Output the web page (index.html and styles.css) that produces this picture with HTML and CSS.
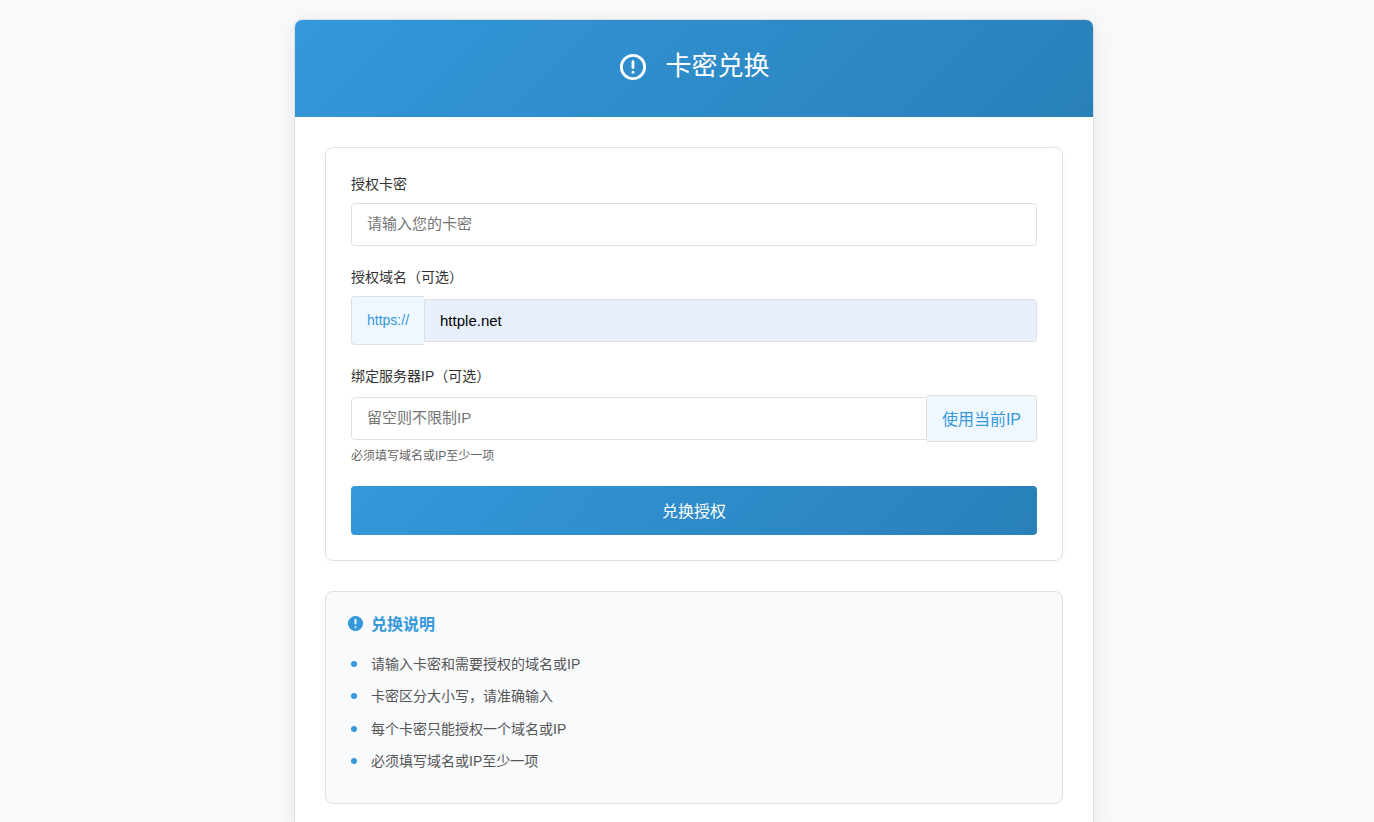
FILE: index.html
```html
<!DOCTYPE html>
<html lang="zh-CN">
<head>
<meta charset="utf-8">
<title>卡密兑换</title>
<link rel="stylesheet" href="styles.css">
</head>
<body>
<main class="card">
  <header class="card-header">
    <svg class="header-icon" viewBox="0 0 24 24" fill="none" stroke="currentColor" stroke-width="2.4" stroke-linecap="round" stroke-linejoin="round"><circle cx="12" cy="12" r="10"/><line x1="12" y1="7.5" x2="12" y2="12.5"/><line x1="12" y1="16.5" x2="12.01" y2="16.5"/></svg>
    <h1 class="title">卡密兑换</h1>
  </header>
  <div class="card-body">
    <form class="panel">
      <div class="group">
        <label class="label">授权卡密</label>
        <input class="input" type="text" placeholder="请输入您的卡密">
      </div>
      <div class="group">
        <label class="label">授权域名（可选）</label>
        <div class="row">
          <span class="prefix">https://</span>
          <input class="input input-domain" type="text" value="httple.net">
        </div>
      </div>
      <div class="group group-last">
        <label class="label">绑定服务器IP（可选）</label>
        <div class="row">
          <input class="input input-ip" type="text" placeholder="留空则不限制IP">
          <button class="ip-button" type="button">使用当前IP</button>
        </div>
        <p class="hint">必须填写域名或IP至少一项</p>
      </div>
      <button class="submit" type="button">兑换授权</button>
    </form>
    <section class="info">
      <h2 class="info-title">
        <svg class="info-icon" viewBox="0 0 20 20" fill="currentColor"><path fill-rule="evenodd" clip-rule="evenodd" d="M18 10a8 8 0 11-16 0 8 8 0 0116 0zm-7 4a1 1 0 11-2 0 1 1 0 012 0zm-1-9a1 1 0 00-1 1v4a1 1 0 102 0V6a1 1 0 00-1-1z"/></svg>
        兑换说明
      </h2>
      <ul class="info-list">
        <li>请输入卡密和需要授权的域名或IP</li>
        <li>卡密区分大小写，请准确输入</li>
        <li>每个卡密只能授权一个域名或IP</li>
        <li>必须填写域名或IP至少一项</li>
      </ul>
    </section>
  </div>
</main>
</body>
</html>
```

FILE: styles.css
```css
* { box-sizing: border-box; }
html, body { margin: 0; }
html { overflow: hidden; }
body {
  padding: 19px 0 20px 14px;
  background: #f8f9fb;
  color: #333;
  font-family: "Liberation Sans", "Noto Sans CJK SC", sans-serif;
  font-size: 14px;
  line-height: 1.5;
}
.card {
  width: 800px;
  margin: 0 auto;
  background: #fff;
  border: 1px solid #e0e0e0;
  border-radius: 8px;
  box-shadow: 0 4px 20px rgba(0, 0, 0, 0.08);
  overflow: hidden;
}
.card-header {
  display: flex;
  align-items: center;
  justify-content: center;
  gap: 18px;
  height: 97px;
  padding: 0 0 4px;
  background: linear-gradient(135deg, #3498db, #2980b9);
  color: #fff;
}
.header-icon { width: 28px; height: 28px; margin-left: 1px; }
.title { margin: 0; font-size: 26px; font-weight: 400; line-height: 37px; }
.card-body { padding: 30px; }
.panel {
  padding: 26px 25px 25px;
  border: 1px solid #e0e0e0;
  border-radius: 8px;
  background: #fff;
  box-shadow: 0 2px 10px rgba(0, 0, 0, 0.03);
}
.group { margin-bottom: 21px; }
.label { display: block; margin-bottom: 8px; font-size: 14px; line-height: 21px; color: #333; }
.input {
  display: block;
  width: 100%;
  height: 43px;
  padding: 0 15px 2px;
  border: 1px solid #e0e0e0;
  border-radius: 4px;
  background: #fff;
  font: 15px "Liberation Sans", "Noto Sans CJK SC", sans-serif;
  color: #000;
  outline: none;
}
.input::placeholder { color: #757575; }
.row { display: flex; align-items: center; }
.prefix {
  flex: none;
  padding: 13px 15px;
  border: 1px solid #e0e0e0;
  border-right: 0;
  border-radius: 4px 0 0 4px;
  background: #f0f8ff;
  color: #3498db;
  font-size: 14px;
  line-height: 21px;
}
.input-domain { flex: 1; padding-bottom: 0; border-radius: 0 4px 4px 0; background: #e8f0fe; }
.input-ip { flex: 1; border-radius: 4px 0 0 4px; }
.ip-button {
  flex: none;
  height: 47px;
  padding: 0 15px 2px;
  border: 1px solid #e0e0e0;
  border-left: 0;
  border-radius: 0 4px 4px 0;
  background: #f0f8ff;
  color: #3498db;
  font: 16px "Liberation Sans", "Noto Sans CJK SC", sans-serif;
}
.hint { margin: 5px 0 0; font-size: 12px; line-height: 18px; color: #666; }
.submit {
  display: block;
  width: 100%;
  height: 49px;
  padding: 0 0 2px;
  border: 0;
  border-radius: 4px;
  background: linear-gradient(135deg, #3498db, #2980b9);
  color: #fff;
  font: 16px "Liberation Sans", "Noto Sans CJK SC", sans-serif;
}
.info {
  margin-top: 30px;
  padding: 21px 20px 20px;
  border: 1px solid #e0e0e0;
  border-radius: 8px;
  background: #f9fafc;
}
.info-title {
  display: flex;
  align-items: center;
  gap: 6px;
  margin: 0 0 16px;
  font-size: 16px;
  font-weight: 700;
  line-height: 24px;
  color: #3498db;
}
.info-icon { width: 19px; height: 19px; flex: none; margin-top: -4px; }
.info-list { margin: 0; padding: 0 0 0 25px; list-style: none; }
.info-list li {
  position: relative;
  margin-bottom: 10px;
  font-size: 14px;
  line-height: 22.4px;
  color: #555;
}
.info-list li::before {
  content: "";
  position: absolute;
  left: -20px;
  top: 8px;
  width: 6px;
  height: 6px;
  border-radius: 50%;
  background: #3498db;
}
```
